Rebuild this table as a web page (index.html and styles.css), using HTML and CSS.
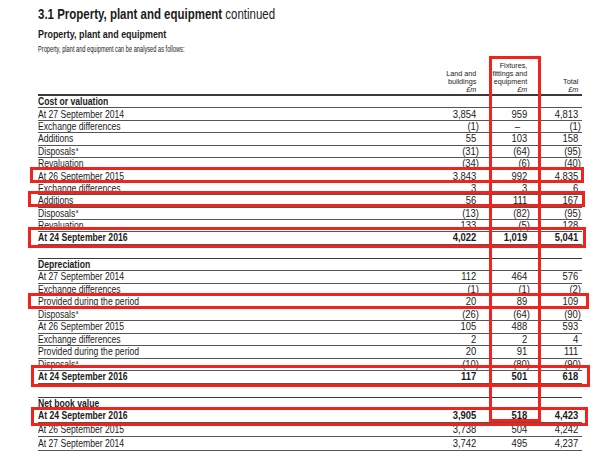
FILE: index.html
```html
<!DOCTYPE html>
<html>
<head>
<meta charset="utf-8">
<link rel="stylesheet" href="styles.css">
</head>
<body>
<div class="page">
  <h1 class="title"><b>3.1 Property, plant and equipment</b> continued</h1>
  <h2 class="sub">Property, plant and equipment</h2>
  <p class="intro">Property, plant and equipment can be analysed as follows:</p>

  <div class="table">
    <div class="row head">
      <div></div>
      <div class="hc">Land and<br>buildings<br><i>£m</i></div>
      <div class="hc">Fixtures,<br>fittings and<br>equipment<br><i>£m</i></div>
      <div class="hc">Total<br><i>£m</i></div>
    </div>

    <div class="section a">
      <div class="row bold"><div>Cost or valuation</div><div></div><div></div><div></div></div>
      <div class="row"><div>At 27 September 2014</div><div>3,854</div><div>959</div><div>4,813</div></div>
      <div class="row"><div>Exchange differences</div><div><span class="neg">(1)</span></div><div><span class="dash">–</span></div><div><span class="neg">(1)</span></div></div>
      <div class="row"><div>Additions</div><div>55</div><div>103</div><div>158</div></div>
      <div class="row"><div>Disposals<sup>a</sup></div><div><span class="neg">(31)</span></div><div><span class="neg">(64)</span></div><div><span class="neg">(95)</span></div></div>
      <div class="row"><div>Revaluation</div><div><span class="neg">(34)</span></div><div><span class="neg">(6)</span></div><div><span class="neg">(40)</span></div></div>
      <div class="row"><div>At 26 September 2015</div><div>3,843</div><div>992</div><div>4,835</div></div>
      <div class="row"><div>Exchange differences</div><div>3</div><div>3</div><div>6</div></div>
      <div class="row"><div>Additions</div><div>56</div><div>111</div><div>167</div></div>
      <div class="row"><div>Disposals<sup>a</sup></div><div><span class="neg">(13)</span></div><div><span class="neg">(82)</span></div><div><span class="neg">(95)</span></div></div>
      <div class="row"><div>Revaluation</div><div>133</div><div><span class="neg">(5)</span></div><div>128</div></div>
      <div class="row bold"><div>At 24 September 2016</div><div>4,022</div><div>1,019</div><div>5,041</div></div>
    </div>

    <div class="section b">
      <div class="row bold"><div>Depreciation</div><div></div><div></div><div></div></div>
      <div class="row"><div>At 27 September 2014</div><div>112</div><div>464</div><div>576</div></div>
      <div class="row"><div>Exchange differences</div><div><span class="neg">(1)</span></div><div><span class="neg">(1)</span></div><div><span class="neg">(2)</span></div></div>
      <div class="row"><div>Provided during the period</div><div>20</div><div>89</div><div>109</div></div>
      <div class="row"><div>Disposals<sup>a</sup></div><div><span class="neg">(26)</span></div><div><span class="neg">(64)</span></div><div><span class="neg">(90)</span></div></div>
      <div class="row"><div>At 26 September 2015</div><div>105</div><div>488</div><div>593</div></div>
      <div class="row"><div>Exchange differences</div><div>2</div><div>2</div><div>4</div></div>
      <div class="row"><div>Provided during the period</div><div>20</div><div>91</div><div>111</div></div>
      <div class="row"><div>Disposals<sup>a</sup></div><div><span class="neg">(10)</span></div><div><span class="neg">(80)</span></div><div><span class="neg">(90)</span></div></div>
      <div class="row bold"><div>At 24 September 2016</div><div>117</div><div>501</div><div>618</div></div>
    </div>

    <div class="section c">
      <div class="row bold nbv"><div>Net book value</div><div></div><div></div><div></div></div>
      <div class="row bold tall"><div>At 24 September 2016</div><div>3,905</div><div>518</div><div>4,423</div></div>
      <div class="row tall"><div>At 26 September 2015</div><div>3,738</div><div>504</div><div>4,242</div></div>
      <div class="row tall2"><div>At 27 September 2014</div><div>3,742</div><div>495</div><div>4,237</div></div>
    </div>
  </div>

  <div class="mark col"></div>
  <div class="mark r1"></div>
  <div class="mark r2"></div>
  <div class="mark r3"></div>
  <div class="mark r4"></div>
  <div class="mark r5"></div>
  <div class="mark r6"></div>
</div>
</body>
</html>
```

FILE: styles.css
```css
* { box-sizing: border-box; }
html, body { margin: 0; padding: 0; background: #fff; }
body {
  font-family: "Liberation Sans", Arial, sans-serif;
  color: #1b1b1b;
}
.page {
  position: relative;
  width: 606px;
  height: 460px;
  overflow: hidden;
  padding-left: 38px;
}
.title {
  margin: 5px 0 0;
  font-size: 14px;
  line-height: 18px;
  font-weight: normal;
  transform: scaleX(0.82);
  transform-origin: left center;
}
.title b { font-weight: bold; }
.sub {
  margin: 5px 0 0;
  font-size: 10.5px;
  line-height: 12px;
  font-weight: bold;
  transform: scaleX(0.85);
  transform-origin: left center;
}
.intro {
  margin: 4px 0 0;
  font-size: 9px;
  line-height: 11px;
  transform: scaleX(0.63);
  transform-origin: left center;
}
.table {
  width: 544px;
  margin-top: 7px;
}
.row {
  display: grid;
  grid-template-columns: 381px 60px 51px 51px;
  padding-right: 1px;
  height: 12.4px;
  align-items: center;
  font-size: 10.5px;
  line-height: 11px;
  border-bottom: 1px solid #555;
}
.row > div { white-space: nowrap; }
.row > div:first-child {
  transform: scaleX(0.82);
  transform-origin: left center;
}
.row > div + div {
  text-align: right;
  padding-right: 3px;
  transform: scaleX(0.9);
  transform-origin: right center;
}
.row.bold { font-weight: bold; }
.head {
  height: auto;
  align-items: end;
  border-bottom: 2px solid #3a3a3a;
  font-size: 8px;
  line-height: 8px;
}
.head i { font-style: italic; }
.neg { margin-right: -3px; }
.dash { margin-right: 8px; }
sup {
  font-size: 5.5px;
  line-height: 0;
  vertical-align: 4px;
  margin-left: 0.5px;
}
.section.b { margin-top: 13px; border-top: 1.5px solid #3a3a3a; }
.section.b .row { height: 12.5px; }
.section.c { margin-top: 13.5px; border-top: 1.5px solid #3a3a3a; }
.section.c .nbv { height: 11px; }
.section.c .tall { height: 14px; }
.section.c .tall2 { height: 13.5px; }

.mark {
  position: absolute;
  border: 3px solid #f2231d;
}
.col { left: 489px; top: 56px; width: 52px; height: 366px; }
.r1 { left: 30px; top: 167px; width: 554px; height: 16px; }
.r2 { left: 28px; top: 191px; width: 557px; height: 16px; }
.r3 { left: 28px; top: 227px; width: 558px; height: 21px; }
.r4 { left: 28px; top: 293px; width: 561px; height: 16px; }
.r5 { left: 31px; top: 365px; width: 559px; height: 22px; }
.r6 { left: 31px; top: 407px; width: 557px; height: 19px; }
```
